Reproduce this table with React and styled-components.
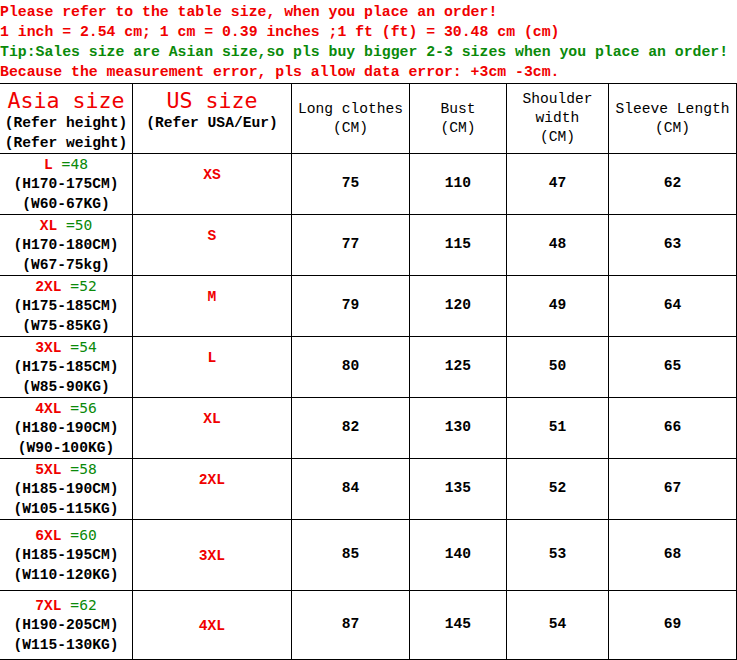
// Packages
import React from "react"
import styled, { createGlobalStyle } from "styled-components"

// Data
const rows = [
    { asia: "L", eu: "48", h: "(H170-175CM)", w: "(W60-67KG)", us: "XS", values: [75, 110, 47, 62] },
    { asia: "XL", eu: "50", h: "(H170-180CM)", w: "(W67-75kg)", us: "S", values: [77, 115, 48, 63] },
    { asia: "2XL", eu: "52", h: "(H175-185CM)", w: "(W75-85KG)", us: "M", values: [79, 120, 49, 64] },
    { asia: "3XL", eu: "54", h: "(H175-185CM)", w: "(W85-90KG)", us: "L", values: [80, 125, 50, 65] },
    { asia: "4XL", eu: "56", h: "(H180-190CM)", w: "(W90-100KG)", us: "XL", values: [82, 130, 51, 66] },
    { asia: "5XL", eu: "58", h: "(H185-190CM)", w: "(W105-115KG)", us: "2XL", values: [84, 135, 52, 67] },
    { asia: "6XL", eu: "60", h: "(H185-195CM)", w: "(W110-120KG)", us: "3XL", values: [85, 140, 53, 68], tall: true },
    { asia: "7XL", eu: "62", h: "(H190-205CM)", w: "(W115-130KG)", us: "4XL", values: [87, 145, 54, 69], tall: true },
]

const measures = [
    ["Long clothes", "(CM)"],
    ["Bust", "(CM)"],
    ["Shoulder", "width", "(CM)"],
    ["Sleeve Length", "(CM)"],
]

// Styles
const Red = "#f00000"
const Green = "#0a8a0a"
const Mono = `"Liberation Mono", "DejaVu Sans Mono", monospace`
const SansMono = `"DejaVu Sans Mono", "Liberation Mono", monospace`

const GlobalStyle = createGlobalStyle`
    * {
        box-sizing: border-box;
    }

    body {
        margin: 0;
        background: #fff;
        color: #000;
        font-family: ${Mono};
    }
`

const Page = styled.div`
    width: 737px;
`

const Notes = styled.div`
    padding-top: 2px;
    margin-bottom: 1px;
`

const Note = styled.p`
    margin: 0;
    height: 20px;
    line-height: 20px;
    font-size: 14.8px;
    font-weight: bold;
    white-space: nowrap;
    color: ${({ $green }) => ($green ? Green : Red)};
`

const Sheet = styled.div`
    display: grid;
    grid-template-columns: 133px 159px 118px 97px 102px 128px;
    grid-template-rows: 70px repeat(6, 61px) 71px 69px;
    border-top: 1px solid #000;
`

const Cell = styled.div`
    display: flex;
    flex-direction: column;
    align-items: center;
    justify-content: ${({ $top }) => ($top ? "flex-start" : "center")};
    padding-top: ${({ $shift }) => $shift || 0}px;
    padding-bottom: ${({ $lift }) => $lift || 0}px;
    border-right: 1px solid #000;
    border-bottom: 1px solid #000;
    font-size: 14.6px;
    font-weight: bold;
    line-height: 19.5px;
    white-space: nowrap;
    text-align: center;
`

const Title = styled.span`
    font-family: ${SansMono};
    font-size: 21.6px;
    font-weight: normal;
    line-height: 24px;
    color: ${Red};
`

const Label = styled.span`
    font-weight: ${({ $light }) => ($light ? "normal" : "bold")};
    line-height: ${({ $light }) => ($light ? "19px" : "20px")};
`

const SizeTag = styled.span`
    color: ${Red};
`

const EuTag = styled.span`
    font-family: ${SansMono};
    font-weight: normal;
    color: ${Green};
`

const UsTag = styled.span`
    color: ${Red};
`

function SizeChart() {
    return (
        <Sheet>
            <Cell $top $shift={5}>
                <Title>Asia size</Title>
                <Label>(Refer height)</Label>
                <Label>(Refer weight)</Label>
            </Cell>

            <Cell $top $shift={5}>
                <Title>US size</Title>
                <Label>(Refer USA/Eur)</Label>
            </Cell>

            {measures.map((lines) => (
                <Cell key={lines[0]}>
                    {lines.map((line) => (
                        <Label $light key={line}>
                            {line}
                        </Label>
                    ))}
                </Cell>
            ))}

            {rows.map((row) => (
                <React.Fragment key={row.asia}>
                    <Cell>
                        <span>
                            <SizeTag>{row.asia}</SizeTag>
                            <EuTag> ={row.eu}</EuTag>
                        </span>
                        <span>{row.h}</span>
                        <span>{row.w}</span>
                    </Cell>

                    <Cell $shift={row.tall ? 3 : 0} $lift={row.tall ? 0 : 17}>
                        <UsTag>{row.us}</UsTag>
                    </Cell>

                    {row.values.map((value, i) => (
                        <Cell key={i}>{value}</Cell>
                    ))}
                </React.Fragment>
            ))}
        </Sheet>
    )
}

function App() {
    return (
        <Page>
            <GlobalStyle />

            <Notes>
                <Note>Please refer to the table size, when you place an order!</Note>
                <Note>1 inch = 2.54 cm; 1 cm = 0.39 inches ;1 ft (ft) = 30.48 cm (cm)</Note>
                <Note $green>
                    Tip:Sales size are Asian size,so pls buy bigger 2-3 sizes when you place an order!
                </Note>
                <Note>Because the measurement error, pls allow data error: +3cm -3cm.</Note>
            </Notes>

            <SizeChart />
        </Page>
    )
}

export default App
